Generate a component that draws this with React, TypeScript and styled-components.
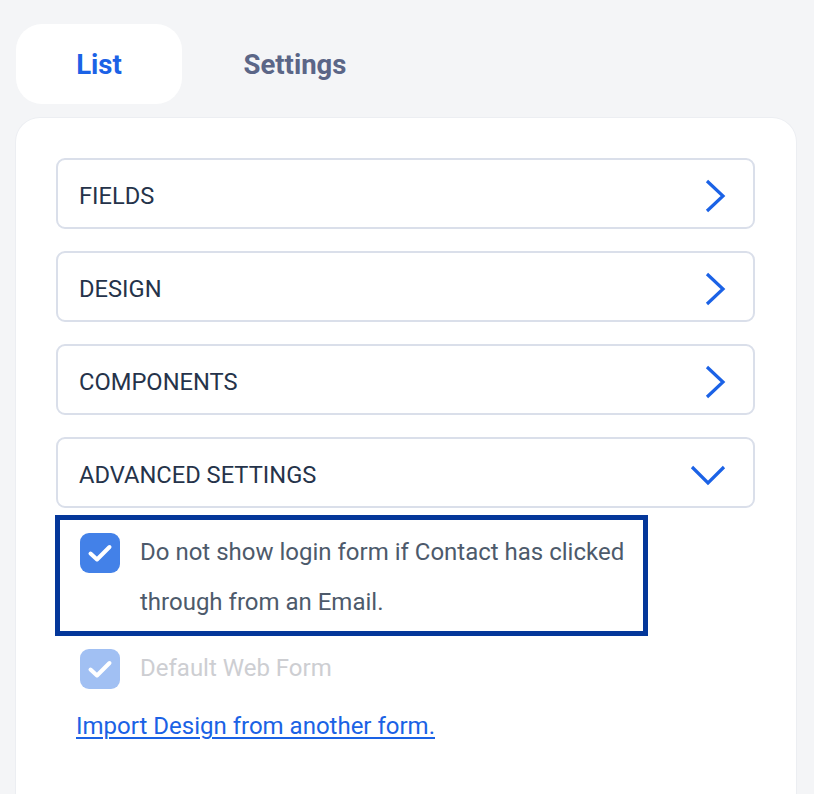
import React from "react";
import styled, { createGlobalStyle } from "styled-components";

const Global = createGlobalStyle`
  html, body { margin: 0; padding: 0; background: #f4f5f7; }
  body { font-family: Roboto, "Liberation Sans", sans-serif; -webkit-font-smoothing: antialiased; }
  * { box-sizing: border-box; }
`;

const Page = styled.div`
  padding: 24px 18px 0 16px;
  height: 794px;
  overflow: hidden;
`;

const Tabs = styled.div`
  display: flex;
  align-items: center;
  gap: 30px;
  margin-bottom: 14px;
`;

const Tab = styled.button<{ $active?: boolean }>`
  width: 166px;
  height: 80px;
  border: none;
  border-radius: 26px;
  background: ${(p) => (p.$active ? "#ffffff" : "transparent")};
  color: ${(p) => (p.$active ? "#1b62e6" : "#5b6687")};
  font-family: Roboto, "Liberation Sans", sans-serif;
  font-weight: 700;
  font-size: 27.5px;
  cursor: pointer;
  padding: 0;
`;

const Card = styled.div`
  background: #ffffff;
  border-radius: 24px 24px 0 0;
  box-shadow: 0 0 0 1px #eceef2;
  padding: 40px 41px 0 40px;
  height: 676px;
`;

const Sections = styled.div`
  display: flex;
  flex-direction: column;
  gap: 22px;
`;

const Row = styled.div`
  display: flex;
  align-items: center;
  justify-content: space-between;
  height: 71px;
  border: 2px solid #dadfea;
  border-radius: 9px;
  padding: 4px 27px 0 21px;
`;

const RowLabel = styled.span`
  font-size: 23.7px;
  color: #25334a;
`;

const Focus = styled.div`
  margin: 7px 0 0 -1px;
  width: 593px;
  border: 5px solid #04379a;
  padding: 7px 6px 4px 20px;
`;

const CheckRow = styled.div<{ $disabled?: boolean }>`
  display: flex;
  align-items: flex-start;
  gap: 20px;
  color: ${(p) => (p.$disabled ? "#cdced2" : "#4d5a6b")};
  font-size: 24px;
  line-height: 50px;
  white-space: nowrap;
`;

const Box = styled.span<{ $disabled?: boolean }>`
  flex: 0 0 40px;
  width: 40px;
  height: 40px;
  margin-top: 6px;
  border-radius: 9px;
  background: ${(p) => (p.$disabled ? "#a1c0f3" : "#4381e8")};
  display: flex;
`;

const Plain = styled.div`
  padding: 7px 0 0 24px;
`;

const Link = styled.a`
  display: inline-block;
  margin: 19px 0 0 20px;
  font-size: 24px;
  color: #1a62e5;
  text-decoration: underline;
  text-underline-offset: 3px;
  text-decoration-thickness: 2px;
`;

const Check = () => (
  <svg width="40" height="40" viewBox="0 0 40 40" fill="none">
    <path d="M10.5 20.5 L17 26.5 L29.5 14" stroke="#fff" strokeWidth="4" strokeLinecap="round" strokeLinejoin="round" />
  </svg>
);

const ChevronRight = () => (
  <svg width="22" height="34" viewBox="0 0 22 34" fill="none">
    <path d="M3 2 L19 17 L3 32" stroke="#1b62e6" strokeWidth="3.2" />
  </svg>
);

const ChevronDown = () => (
  <svg width="36" height="22" viewBox="0 0 36 22" fill="none">
    <path d="M2 3 L18 19 L34 3" stroke="#1b62e6" strokeWidth="3.2" />
  </svg>
);

const sections = ["FIELDS", "DESIGN", "COMPONENTS"];

export default function App() {
  return (
    <>
      <Global />
      <Page>
        <Tabs>
          <Tab $active>List</Tab>
          <Tab>Settings</Tab>
        </Tabs>
        <Card>
          <Sections>
            {sections.map((s) => (
              <Row key={s}>
                <RowLabel>{s}</RowLabel>
                <ChevronRight />
              </Row>
            ))}
            <Row>
              <RowLabel>ADVANCED SETTINGS</RowLabel>
              <ChevronDown />
            </Row>
          </Sections>
          <Focus>
            <CheckRow>
              <Box>
                <Check />
              </Box>
              <span>
                Do not show login form if Contact has clicked
                <br />
                through from an Email.
              </span>
            </CheckRow>
          </Focus>
          <Plain>
            <CheckRow $disabled>
              <Box $disabled>
                <Check />
              </Box>
              <span>Default Web Form</span>
            </CheckRow>
          </Plain>
          <Link href="#">Import Design from another form.</Link>
        </Card>
      </Page>
    </>
  );
}
